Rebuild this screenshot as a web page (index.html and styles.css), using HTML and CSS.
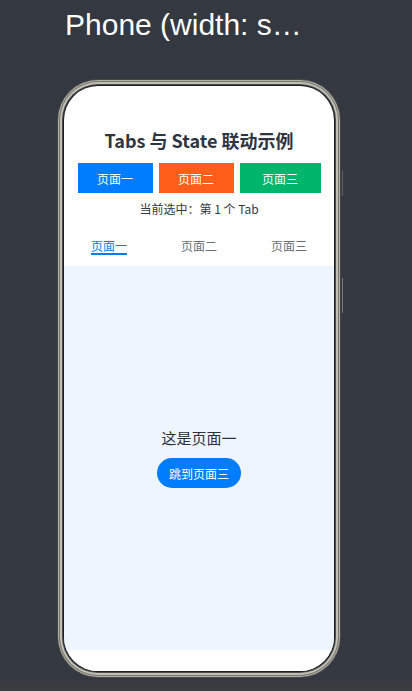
FILE: index.html
```html
<!DOCTYPE html>
<html lang="zh">
<head>
<meta charset="utf-8">
<title>Phone</title>
<link rel="stylesheet" href="styles.css">
</head>
<body>
<div class="page">
  <h1 class="device-title">Phone (width: s…</h1>
  <div class="stage">
    <div class="phone">
      <span class="side-key key-a"></span>
      <span class="side-key key-b"></span>
      <div class="screen">
        <div class="top">
          <h2 class="app-title">Tabs 与 State 联动示例</h2>
          <div class="btn-row">
            <button class="btn btn-blue">页面一</button>
            <button class="btn btn-orange">页面二</button>
            <button class="btn btn-green">页面三</button>
          </div>
          <p class="status">当前选中：第 1 个 Tab</p>
        </div>
        <div class="tabbar">
          <div class="tab active"><span>页面一</span></div>
          <div class="tab"><span>页面二</span></div>
          <div class="tab"><span>页面三</span></div>
        </div>
        <div class="content">
          <p class="content-text">这是页面一</p>
          <button class="jump">跳到页面三</button>
        </div>
        <div class="bottom-gap"></div>
      </div>
    </div>
  </div>
  <div class="footer-bar"></div>
</div>
</body>
</html>
```
FILE: styles.css
```css
html, body {
  margin: 0;
  padding: 0;
  background: #343841;
}
.page {
  width: 412px;
  height: 691px;
  overflow: hidden;
  display: flex;
  flex-direction: column;
}
.device-title {
  margin: 0;
  padding: 7px 0 0 65px;
  height: 36px;
  font-family: "Liberation Sans", Arial, sans-serif;
  font-weight: normal;
  font-size: 30px;
  line-height: 36px;
  color: #ffffff;
  white-space: nowrap;
}
.stage {
  padding-left: 64px;
  margin-top: 43px;
}
.phone {
  position: relative;
  width: 270px;
  height: 585px;
}
.side-key {
  position: absolute;
  right: -9px;
  width: 1px;
  background: #5e6064;
}
.key-a { top: 84px; height: 26px; }
.key-b { top: 192px; height: 35px; background: #7c7c7a; }
.screen {
  width: 270px;
  height: 585px;
  border-radius: 34px;
  background: #ffffff;
  overflow: hidden;
  display: flex;
  flex-direction: column;
  box-shadow:
    0 0 0 1px #1e1f22,
    0 0 0 2px #4a4b4f,
    0 0 0 4px #c2bfb5,
    0 0 0 5px #77766f,
    0 0 0 6px #b3b0a6,
    0 0 0 7px #46474a;
  font-family: "Noto Sans CJK SC", "Noto Sans", sans-serif;
}
.top {
  padding-top: 42px;
  display: flex;
  flex-direction: column;
  align-items: center;
}
.app-title {
  margin: 0;
  font-size: 18px;
  line-height: 24px;
  font-weight: bold;
  color: #2f3540;
}
.btn-row {
  margin-top: 11px;
  display: flex;
  gap: 6px;
}
.btn {
  border: none;
  margin: 0;
  padding: 0;
  height: 30px;
  width: 75px;
  color: #ffffff;
  font-family: "Noto Sans CJK SC", sans-serif;
  font-size: 12px;
}
.btn-blue { background: #007dff; }
.btn-orange { background: #ff5e1a; }
.btn-green { background: #00b56c; width: 81px; }
.status {
  margin: 7px 0 0;
  font-size: 12px;
  line-height: 18px;
  color: #333842;
}
.tabbar {
  height: 48px;
  display: flex;
}
.tab {
  flex: 1;
  display: flex;
  justify-content: center;
  align-items: flex-end;
  padding-bottom: 11px;
}
.tab span {
  font-size: 12px;
  line-height: 14px;
  color: #6b6f75;
  border-bottom: 2px solid transparent;
}
.tab.active span {
  color: #007dff;
  border-bottom-color: #007dff;
}
.content {
  height: 384px;
  background: #eef5ff;
  display: flex;
  flex-direction: column;
  align-items: center;
  justify-content: center;
  gap: 10px;
}
.content-text {
  margin: 0;
  font-size: 15px;
  line-height: 20px;
  color: #2b313b;
}
.jump {
  border: none;
  margin: 0;
  padding: 0;
  width: 84px;
  height: 30px;
  border-radius: 15px;
  background: #007dff;
  color: #ffffff;
  font-family: "Noto Sans CJK SC", sans-serif;
  font-size: 12px;
}
.bottom-gap {
  flex: 1;
  background: #ffffff;
}
.footer-bar {
  margin-top: 10px;
  height: 10px;
  background: #3a3c40;
}
```
